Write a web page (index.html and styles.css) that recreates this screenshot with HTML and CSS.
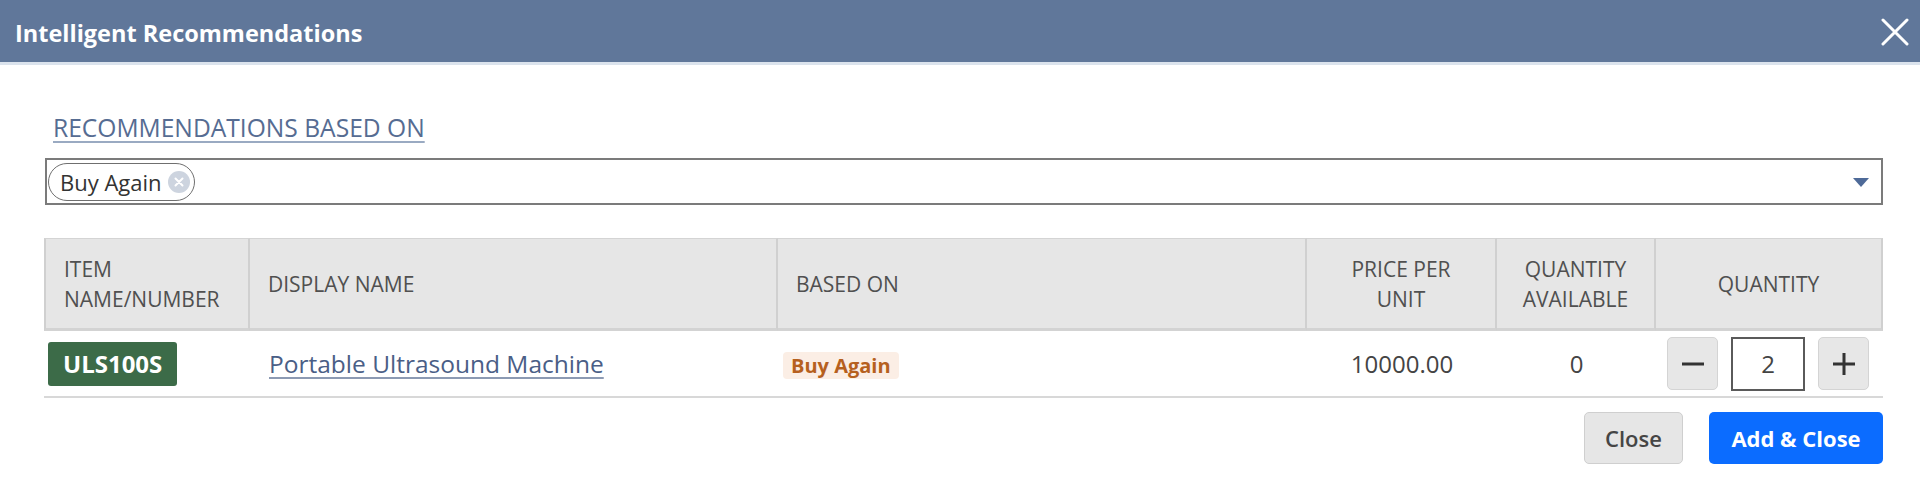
FILE: index.html
```html
<!DOCTYPE html>
<html lang="en">
<head>
<meta charset="utf-8">
<title>Intelligent Recommendations</title>
<link rel="stylesheet" href="styles.css">
</head>
<body>
<div class="dialog">
  <header class="titlebar">
    <h1 class="title">Intelligent Recommendations</h1>
    <button class="close-x" aria-label="Close">
      <svg width="28" height="28" viewBox="0 0 28 28"><path d="M2 2 L26 26 M26 2 L2 26" stroke="#fff" stroke-width="3" stroke-linecap="round" fill="none"/></svg>
    </button>
  </header>
  <main class="content">
    <a class="based-label" href="#">RECOMMENDATIONS BASED ON</a>
    <div class="multiselect">
      <span class="chip">Buy Again<span class="chip-x"><svg width="22" height="22" viewBox="0 0 22 22"><circle cx="11" cy="11" r="11" fill="#cdd4df"/><path d="M7.5 7.5 L14.5 14.5 M14.5 7.5 L7.5 14.5" stroke="#fff" stroke-width="2" stroke-linecap="round"/></svg></span></span>
      <span class="caret"><svg width="16" height="9" viewBox="0 0 16 9"><path d="M0 0 H16 L8 9 Z" fill="#4e6a98"/></svg></span>
    </div>
    <table class="rec-table">
      <colgroup>
        <col class="c-item"><col class="c-name"><col class="c-based"><col class="c-price"><col class="c-avail"><col class="c-qty">
      </colgroup>
      <thead>
        <tr class="head-row">
          <th class="left">ITEM<br>NAME/NUMBER</th>
          <th class="left">DISPLAY NAME</th>
          <th class="left">BASED ON</th>
          <th class="center">PRICE PER<br>UNIT</th>
          <th class="center">QUANTITY<br>AVAILABLE</th>
          <th class="center">QUANTITY</th>
        </tr>
      </thead>
      <tbody>
        <tr class="data-row">
          <td class="cell-item"><span class="item-badge">ULS100S</span></td>
          <td class="cell-name"><a class="item-link" href="#">Portable Ultrasound Machine</a></td>
          <td class="cell-based"><span class="based-tag">Buy Again</span></td>
          <td class="center num">10000.00</td>
          <td class="center num">0</td>
          <td class="center">
            <div class="stepper">
              <button class="step-btn" aria-label="Decrease"><svg width="24" height="24" viewBox="0 0 24 24"><path d="M1 12 H23" stroke="#333" stroke-width="3"/></svg></button>
              <span class="qty-input">2</span>
              <button class="step-btn" aria-label="Increase"><svg width="24" height="24" viewBox="0 0 24 24"><path d="M1 12 H23 M12 1 V23" stroke="#333" stroke-width="3"/></svg></button>
            </div>
          </td>
        </tr>
      </tbody>
    </table>
    <div class="actions">
      <button class="btn btn-secondary">Close</button>
      <button class="btn btn-primary">Add &amp; Close</button>
    </div>
  </main>
</div>
</body>
</html>
```
FILE: styles.css
```css
* { box-sizing: border-box; }
html, body { margin: 0; padding: 0; background: #fff; }
body { font-family: "Open Sans", "Liberation Sans", sans-serif; color: #444; }

.titlebar {
  height: 65px;
  background: #60779a;
  border-bottom: 3px solid #dbe3ed;
  display: flex;
  align-items: center;
  justify-content: space-between;
  padding: 0 11px 0 15px;
}
.title {
  margin: 4px 0 0;
  font-size: 23.5px;
  font-weight: 700;
  color: #fff;
  line-height: 33px;
}
.close-x {
  background: none;
  border: 0;
  padding: 0;
  width: 28px;
  height: 28px;
  display: flex;
  margin-top: 2px;
}

.content {
  padding: 46px 37px 0 44px;
  display: flex;
  flex-direction: column;
}
.based-label {
  align-self: flex-start;
  margin-left: 9px;
  font-size: 24.6px;
  line-height: 33px;
  color: #566c92;
  text-decoration: underline;
  text-decoration-color: #9aaac2;
  text-underline-offset: 4px;
}
.multiselect {
  margin: 14px 0 0 1px;
  height: 47px;
  border: 2px solid #7b7b7b;
  display: flex;
  align-items: center;
  justify-content: space-between;
  padding: 0 12px 0 1px;
}
.chip {
  display: inline-flex;
  align-items: center;
  height: 38px;
  border: 1.5px solid #6f6f6f;
  border-radius: 19px;
  padding: 0 4px 0 11px;
  font-size: 22px;
  color: #333;
  gap: 6px;
}
.chip-x { display: flex; }
.caret { display: flex; margin-top: 2px; }

.rec-table {
  margin-top: 33px;
  width: 100%;
  border-collapse: separate;
  border-spacing: 0;
  table-layout: fixed;
}
.c-item { width: 206px; }
.c-name { width: 528px; }
.c-based { width: 529px; }
.c-price { width: 190px; }
.c-avail { width: 159px; }
.c-qty { width: 227px; }

.head-row th {
  height: 93px;
  background: #e6e6e6;
  border-top: 1px solid #d4d4d4;
  border-bottom: 3px solid #d3d3d3;
  border-right: 2px solid #d0d0d0;
  font-size: 21px;
  font-weight: 400;
  line-height: 30px;
  color: #505050;
  padding: 0 12px 0 18px;
  vertical-align: middle;
}
.head-row th:first-child { border-left: 2px solid #d0d0d0; }
.left { text-align: left; }
.center { text-align: center; }
.head-row th.center { padding: 0 6px; }

.data-row td {
  height: 67px;
  border-bottom: 2px solid #d8d8d8;
  vertical-align: middle;
  font-size: 24px;
  color: #444;
}
.cell-item { padding-left: 4px; }
.cell-name { padding-left: 19px; }
.cell-based { padding-left: 5px; }
.item-badge {
  display: inline-block;
  background: #3c6b48;
  color: #fff;
  font-weight: 700;
  font-size: 24px;
  line-height: 44px;
  height: 44px;
  padding: 0 15px;
  border-radius: 3px;
}
.item-link {
  font-size: 24.5px;
  color: #4a5e86;
  text-decoration: underline;
  text-decoration-color: #8c9ab3;
  text-underline-offset: 4px;
}
.based-tag {
  display: inline-block;
  background: #fbeee5;
  color: #b6601e;
  font-weight: 700;
  font-size: 20px;
  line-height: 27px;
  padding: 0 8px;
  border-radius: 4px;
}
.num { color: #474747; }

.stepper {
  display: flex;
  justify-content: center;
  align-items: center;
  gap: 13px;
  padding-right: 3px;
}
.step-btn {
  width: 51px;
  height: 53px;
  background: #e7e7e7;
  border: 1px solid #d4d4d4;
  border-radius: 5px;
  display: flex;
  align-items: center;
  justify-content: center;
  padding: 0;
}
.qty-input {
  width: 74px;
  height: 54px;
  border: 2px solid #5a5a5a;
  display: flex;
  align-items: center;
  justify-content: center;
  font-size: 24px;
  color: #444;
  background: #fff;
}

.actions {
  display: flex;
  justify-content: flex-end;
  gap: 26px;
  margin-top: 14px;
}
.btn {
  height: 52px;
  border-radius: 5px;
  font-family: "Open Sans", "Liberation Sans", sans-serif;
  font-size: 22px;
  font-weight: 600;
  padding: 0;
}
.btn-secondary {
  width: 99px;
  background: #e6e6e6;
  border: 1.5px solid #cfcfcf;
  color: #454545;
}
.btn-primary {
  width: 174px;
  background: #0b6cff;
  border: 0;
  color: #fff;
  font-weight: 700;
}
```
